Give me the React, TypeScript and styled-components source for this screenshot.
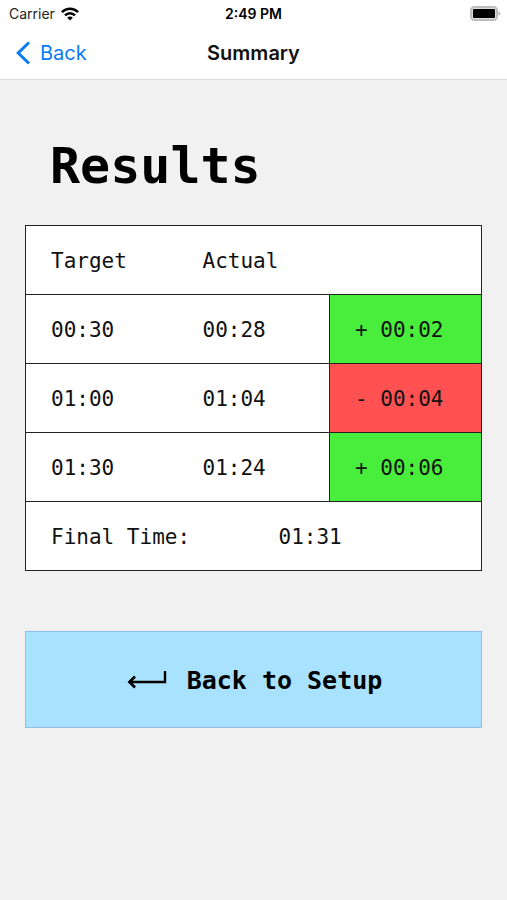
import React from "react";
import styled, { createGlobalStyle } from "styled-components";

const GlobalStyle = createGlobalStyle`
  *, *::before, *::after { box-sizing: border-box; }
  body {
    margin: 0;
    background: #f1f1f1;
    color: #000;
    font-family: Inter, "Liberation Sans", sans-serif;
  }
`;

const mono = `"DejaVu Sans Mono", "Liberation Mono", monospace`;

const Screen = styled.div`
  min-height: 100vh;
  background: #f1f1f1;
`;

const Header = styled.header`
  background: #fff;
  border-bottom: 1px solid #dcdcdc;
`;

const TripleRow = styled.div`
  display: grid;
  grid-template-columns: 1fr auto 1fr;
  align-items: center;
`;

const StatusBar = styled(TripleRow)`
  height: 27px;
  padding: 0 6px;
  font-size: 14px;
`;

const NavBar = styled(TripleRow)`
  height: 52px;
  padding: 0 16px;
`;

const Carrier = styled.div`
  display: flex;
  align-items: center;
  gap: 6px;
  padding-left: 3px;
  color: #222;
`;

const Clock = styled.time`
  font-weight: 600;
`;

const Battery = styled.svg`
  justify-self: end;
`;

const BackLink = styled.a`
  display: flex;
  align-items: center;
  gap: 9px;
  color: #087bf5;
  font-size: 20px;
  text-decoration: none;
`;

const NavTitle = styled.div`
  color: #111;
  font-size: 20px;
  font-weight: 600;
`;

const Content = styled.main`
  padding: 57px 25px 0;
`;

const Title = styled.h1`
  margin: 0 25px 30px;
  font: bold 50px/58px ${mono};
`;

const ResultsTable = styled.table`
  width: 100%;
  table-layout: fixed;
  border-collapse: collapse;
  background: #fff;
  border: 1px solid #222;
  font: 21px/24px ${mono};
  color: #111;
`;

const Row = styled.tr`
  height: 69px;
  border-bottom: 1px solid #222;
`;

const Cell = styled.td`
  padding: 1px 0 0 25px;
  text-align: left;
  font-weight: normal;
  white-space: nowrap;
`;

const HeadCell = styled(Cell).attrs({ as: "th" })``;

const DeltaCell = styled(Cell)<{ $ahead: boolean }>`
  border-left: 1px solid #222;
  background: ${({ $ahead }) => ($ahead ? "#49ed3b" : "#ff5151")};
`;

const SetupButton = styled.button`
  display: flex;
  align-items: center;
  justify-content: center;
  gap: 20px;
  width: 100%;
  height: 97px;
  margin-top: 60px;
  padding: 2px 0 0 2px;
  border: 1px solid #92bcea;
  border-radius: 0;
  background: #a9e2ff;
  color: #000;
  font: bold 25px/30px ${mono};
  cursor: pointer;
`;

const splits = [
  { target: "00:30", actual: "00:28", delta: "+ 00:02", ahead: true },
  { target: "01:00", actual: "01:04", delta: "- 00:04", ahead: false },
  { target: "01:30", actual: "01:24", delta: "+ 00:06", ahead: true },
];

const WifiIcon = () => (
  <svg width="18" height="14" viewBox="0 0 18 14" aria-hidden="true">
    <g fill="none" stroke="#000" strokeWidth="2.5">
      <path d="M0.9 5.2C5.4 0.5 12.6 0.5 17.1 5.2" />
      <path d="M4 8.4C6.8 5.5 11.2 5.5 14 8.4" />
    </g>
    <path d="M6.2 10.7C7.8 9.2 10.2 9.2 11.8 10.7L9 13.6Z" />
  </svg>
);

const BatteryIcon = () => (
  <Battery width="31" height="15" viewBox="0 0 31 15" aria-hidden="true">
    <rect x="1" y="1" width="26" height="13" rx="3.5" fill="#ddd" stroke="#bdbdbd" strokeWidth="2" />
    <rect x="3" y="3" width="22" height="9" rx="1" />
    <path d="M28.5 5L30.5 7.5L28.5 10Z" fill="#aaa" />
  </Battery>
);

const BackChevron = () => (
  <svg width="15" height="24" viewBox="0 0 15 24" aria-hidden="true">
    <path d="M13 1.5L2.2 12L13 22.5" fill="none" stroke="#087bf5" strokeWidth="3" />
  </svg>
);

const ReturnIcon = () => (
  <svg width="40" height="20" viewBox="0 0 40 20" aria-hidden="true">
    <path d="M38 0V11H2" fill="none" stroke="#000" strokeWidth="2.4" />
    <path d="M8 5.5L2.5 11L8 16.5" fill="none" stroke="#000" strokeWidth="2.8" />
  </svg>
);

export default function App() {
  return (
    <Screen>
      <GlobalStyle />
      <Header>
        <StatusBar>
          <Carrier>
            Carrier
            <WifiIcon />
          </Carrier>
          <Clock>2:49 PM</Clock>
          <BatteryIcon />
        </StatusBar>
        <NavBar as="nav">
          <BackLink href="#setup">
            <BackChevron />
            Back
          </BackLink>
          <NavTitle>Summary</NavTitle>
        </NavBar>
      </Header>
      <Content>
        <Title>Results</Title>
        <ResultsTable>
          <colgroup>
            <col span={6} />
          </colgroup>
          <thead>
            <Row>
              <HeadCell colSpan={2} scope="col">Target</HeadCell>
              <HeadCell colSpan={2} scope="col">Actual</HeadCell>
              <Cell colSpan={2} />
            </Row>
          </thead>
          <tbody>
            {splits.map((split) => (
              <Row key={split.target}>
                <Cell colSpan={2}>{split.target}</Cell>
                <Cell colSpan={2}>{split.actual}</Cell>
                <DeltaCell colSpan={2} $ahead={split.ahead}>{split.delta}</DeltaCell>
              </Row>
            ))}
          </tbody>
          <tfoot>
            <Row>
              <HeadCell colSpan={3} scope="row">Final Time:</HeadCell>
              <Cell colSpan={3}>01:31</Cell>
            </Row>
          </tfoot>
        </ResultsTable>
        <SetupButton type="button">
          <ReturnIcon />
          Back to Setup
        </SetupButton>
      </Content>
    </Screen>
  );
}
